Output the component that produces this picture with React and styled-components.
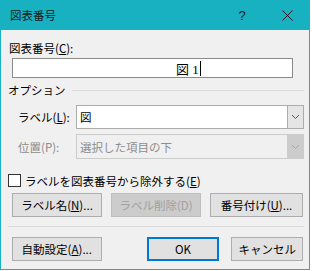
import React from 'react'
import styled, { createGlobalStyle } from 'styled-components'

const GlobalStyle = createGlobalStyle`
  html, body {
    margin: 0;
    padding: 0;
    background: #ffffff;
  }
  body {
    font-family: "Noto Sans CJK JP", "Noto Sans", sans-serif;
    font-size: 11.5px;
    color: #000;
  }
`

const Window = styled.div`
  width: 310px;
  height: 270px;
  box-sizing: border-box;
  border: 1px solid #17b1c1;
  border-top: none;
  background: #f0f0f0;
  display: flex;
  flex-direction: column;
`

const TitleBar = styled.div`
  height: 30px;
  margin: 0 -1px;
  background: #17b1c1;
  display: flex;
  align-items: center;
  padding-left: 10px;
  color: #1a1a1a;
  font-size: 11.5px;
`

const Title = styled.span`
  flex: 1;
  line-height: 16px;
`

const TitleBtn = styled.div`
  width: ${p => p.w}px;
  height: 30px;
  display: flex;
  align-items: center;
  justify-content: center;
  font-family: "Liberation Sans", sans-serif;
  font-size: 13px;
  color: #1a1a1a;
`

const Content = styled.div`
  padding: 0 5px 0 7px;
  display: flex;
  flex-direction: column;
`

const Label = styled.div`
  line-height: 16px;
  padding-left: ${p => p.pl || 0}px;
  color: ${p => (p.disabled ? '#8c8c8c' : '#000')};
  white-space: nowrap;
`

const TextBox = styled.div`
  margin: 2px 11px 0 4px;
  height: 20px;
  box-sizing: border-box;
  border: 1px solid #8a8a8a;
  background: #fff;
  display: flex;
  align-items: center;
  padding-left: 163px;
  font-family: "Liberation Serif", "Noto Sans CJK JP", serif;
  font-size: 13px;
`

const Caret = styled.span`
  display: inline-block;
  width: 1px;
  height: 15px;
  margin-left: 1px;
  background: #000;
`

const GroupHead = styled.div`
  margin-top: 4px;
  height: 16px;
  display: flex;
  align-items: center;
  gap: 6px;
  &::after {
    content: '';
    flex: 1;
    height: 1px;
    background: #dcdcdc;
  }
`

const FieldRow = styled.div`
  margin-top: ${p => p.mt}px;
  display: grid;
  grid-template-columns: 68px 1fr;
  align-items: center;
`

const Combo = styled.div`
  height: ${p => p.h}px;
  box-sizing: border-box;
  border: 1px solid ${p => (p.disabled ? '#cccccc' : '#acacac')};
  background: ${p => (p.disabled ? '#f0f0f0' : '#fff')};
  display: flex;
  color: ${p => (p.disabled ? '#8d8d8d' : '#000')};
`

const ComboText = styled.div`
  flex: 1;
  display: flex;
  align-items: center;
  padding-left: 3px;
`

const DropBtn = styled.div`
  width: 16px;
  box-sizing: border-box;
  border-left: 1px solid ${p => (p.disabled ? '#cccccc' : '#acacac')};
  background: ${p => (p.disabled ? '#cccccc' : '#e5e5e5')};
  display: flex;
  align-items: center;
  justify-content: center;
`

const CheckRow = styled.div`
  margin-top: 15px;
  display: flex;
  align-items: center;
  gap: 4px;
  height: 13px;
`

const CheckBox = styled.span`
  width: 13px;
  height: 13px;
  box-sizing: border-box;
  border: 1px solid #333;
  background: #fff;
`

const ButtonRow = styled.div`
  margin-top: ${p => p.mt}px;
  padding: 0 1px 0 4px;
  display: flex;
  justify-content: ${p => p.justify || 'space-between'};
`

const Button = styled.div`
  width: ${p => p.w}px;
  height: 24px;
  box-sizing: border-box;
  border: ${p => (p.primary ? '2px solid #0078d7' : `1px solid ${p.disabled ? '#bfbfbf' : '#adadad'}`)};
  background: ${p => (p.disabled ? '#cccccc' : '#e1e1e1')};
  color: ${p => (p.disabled ? '#a0a0a0' : '#000')};
  display: flex;
  align-items: center;
  justify-content: center;
  white-space: nowrap;
  margin-left: ${p => p.ml || 0}px;
`

const Separator = styled.div`
  margin-top: 9px;
  height: 1px;
  background: #dadada;
`

const Chevron = ({ color }) => (
  <svg width="9" height="6" viewBox="0 0 9 6">
    <path d="M1 1 L4.5 4.5 L8 1" fill="none" stroke={color} strokeWidth="1" />
  </svg>
)

export default function App() {
  return (
    <>
      <GlobalStyle />
      <Window>
        <TitleBar>
          <Title>図表番号</Title>
          <TitleBtn w={46}>?</TitleBtn>
          <TitleBtn w={45}>
            <svg width="11" height="11" viewBox="0 0 11 11">
              <path d="M0.5 0.5 L10.5 10.5 M10.5 0.5 L0.5 10.5" stroke="#1a1a1a" strokeWidth="1" />
            </svg>
          </TitleBtn>
        </TitleBar>
        <Content>
          <Label pl={1} style={{ marginTop: 10 }}>図表番号(<u>C</u>):</Label>
          <TextBox>
            図 1<Caret />
          </TextBox>
          <GroupHead>オプション</GroupHead>
          <FieldRow mt={7}>
            <Label pl={10}>ラベル(<u>L</u>):</Label>
            <Combo h={24}>
              <ComboText>図</ComboText>
              <DropBtn><Chevron color="#555" /></DropBtn>
            </Combo>
          </FieldRow>
          <FieldRow mt={5}>
            <Label pl={10} disabled>位置(P):</Label>
            <Combo h={25} disabled>
              <ComboText>選択した項目の下</ComboText>
              <DropBtn disabled><Chevron color="#a8a8a8" /></DropBtn>
            </Combo>
          </FieldRow>
          <CheckRow>
            <CheckBox />
            <Label>ラベルを図表番号から除外する(<u>E</u>)</Label>
          </CheckRow>
          <ButtonRow mt={6}>
            <Button w={90}>ラベル名(<u>N</u>)...</Button>
            <Button w={90} disabled>ラベル削除(D)</Button>
            <Button w={93}>番号付け(<u>U</u>)...</Button>
          </ButtonRow>
          <Separator />
          <ButtonRow mt={10} justify="flex-start">
            <Button w={90}>自動設定(<u>A</u>)...</Button>
            <Button w={73} ml={45} primary>OK</Button>
            <Button w={72} ml={12}>キャンセル</Button>
          </ButtonRow>
        </Content>
      </Window>
    </>
  )
}
